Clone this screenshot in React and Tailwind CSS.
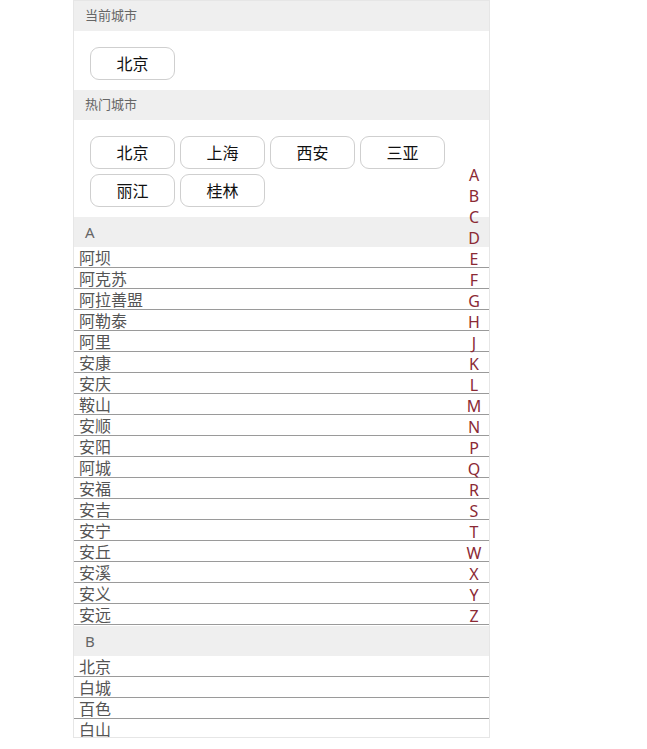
import React from "react";

const FONT = { fontFamily: '"Noto Sans", "Noto Sans CJK SC", sans-serif' };

const aCities = ["阿坝","阿克苏","阿拉善盟","阿勒泰","阿里","安康","安庆","鞍山","安顺","安阳","阿城","安福","安吉","安宁","安丘","安溪","安义","安远"];
const bCities = ["北京","白城","百色","白山"];
const letters = ["A","B","C","D","E","F","G","H","J","K","L","M","N","P","Q","R","S","T","W","X","Y","Z"];
const hot = ["北京","上海","西安","三亚","丽江","桂林"];

function Header({ children, big }) {
  return (
    <div className={`h-[30px] bg-[#efefef] flex items-center pl-[11px] text-[#666] ${big ? "text-[15px]" : "text-[13px]"}`}>
      {children}
    </div>
  );
}

function Btn({ children }) {
  return (
    <div className="w-[85px] h-[33px] border border-[#cfcfcf] rounded-[9px] flex items-center justify-center text-[16px] text-[#111] bg-white">
      {children}
    </div>
  );
}

function Row({ children }) {
  return (
    <div className="h-[21px] border-b border-[#9a9a9a] pl-[5px] pt-[1px] text-[16px] leading-[20px] text-[#555]">
      {children}
    </div>
  );
}

export default function App() {
  return (
    <div className="w-[647px] h-[749px] bg-white" style={FONT}>
      <div className="relative ml-[73px] w-[417px] h-[738px] overflow-hidden border border-[#e6e6e6] bg-white">
        <Header>当前城市</Header>
        <div className="pl-4 pt-4 pb-[10px]">
          <Btn>北京</Btn>
        </div>
        <Header>热门城市</Header>
        <div className="pl-4 pt-4 pb-[10px] flex flex-wrap gap-x-[5px] gap-y-[5px] w-[380px]">
          {hot.map((c) => (
            <Btn key={c}>{c}</Btn>
          ))}
        </div>
        <Header big>A</Header>
        {aCities.map((c) => (
          <Row key={c}>{c}</Row>
        ))}
        <div className="mt-[1px]">
          <Header big>B</Header>
        </div>
        {bCities.map((c) => (
          <Row key={c}>{c}</Row>
        ))}
        <div className="absolute top-[164px] right-[7px] flex flex-col items-end">
          {letters.map((l) => (
            <div key={l} className="h-[21px] leading-[21px] text-[16px] text-[#8b2a35] text-center w-[16px]">
              {l}
            </div>
          ))}
        </div>
      </div>
    </div>
  );
}
